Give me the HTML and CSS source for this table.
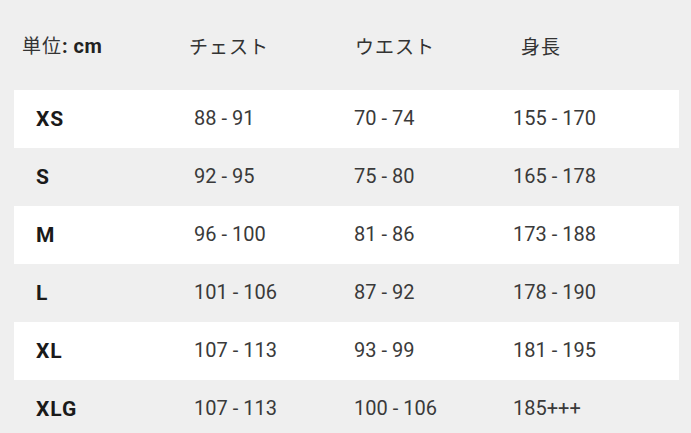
FILE: index.html
```html
<!DOCTYPE html>
<html lang="ja">
<head>
<meta charset="utf-8">
<link rel="stylesheet" href="styles.css">
</head>
<body>
<div class="sheet">
  <div class="head">
    <div class="hcell"><span class="jp">単位</span><span class="unit">: cm</span></div>
    <div class="hcell jp">チェスト</div>
    <div class="hcell jp">ウエスト</div>
    <div class="hcell jp">身長</div>
  </div>
  <div class="row white"><div class="size">XS</div><div class="num">88 - 91</div><div class="num">70 - 74</div><div class="num">155 - 170</div></div>
  <div class="row"><div class="size">S</div><div class="num">92 - 95</div><div class="num">75 - 80</div><div class="num">165 - 178</div></div>
  <div class="row white"><div class="size">M</div><div class="num">96 - 100</div><div class="num">81 - 86</div><div class="num">173 - 188</div></div>
  <div class="row"><div class="size">L</div><div class="num">101 - 106</div><div class="num">87 - 92</div><div class="num">178 - 190</div></div>
  <div class="row white"><div class="size">XL</div><div class="num">107 - 113</div><div class="num">93 - 99</div><div class="num">181 - 195</div></div>
  <div class="row"><div class="size">XLG</div><div class="num">107 - 113</div><div class="num">100 - 106</div><div class="num">185+++</div></div>
</div>
</body>
</html>
```
FILE: styles.css
```css
html, body {
  margin: 0;
  padding: 0;
  background: #efefef;
}
body {
  font-family: Roboto, "Noto Sans CJK JP", sans-serif;
  color: #333;
  overflow: hidden;
}
.sheet {
  width: 691px;
  height: 433px;
  overflow: hidden;
}
.head {
  height: 90px;
  display: grid;
  grid-template-columns: 167px 166px 166px auto;
  align-items: center;
  padding-left: 22px;
  box-sizing: border-box;
  font-size: 19px;
  color: #333;
}
.hcell {
  line-height: 1;
}
.jp {
  font-family: "Noto Sans CJK JP", sans-serif;
  font-weight: 400;
  letter-spacing: 1px;
}
.unit {
  font-family: Roboto, sans-serif;
  font-weight: 700;
  font-size: 20px;
  letter-spacing: 0.5px;
  color: #222;
}
.row {
  height: 58px;
  margin: 0 12px 0 14px;
  display: grid;
  grid-template-columns: 158px 160px 159px auto;
  align-items: center;
  padding-left: 22px;
}
.white {
  background: #ffffff;
}
.size {
  font-weight: 700;
  font-size: 21px;
  color: #1a1a1a;
  letter-spacing: 1px;
}
.num {
  font-size: 20px;
  color: #3a3a3a;
  padding-bottom: 2px;
}
```
